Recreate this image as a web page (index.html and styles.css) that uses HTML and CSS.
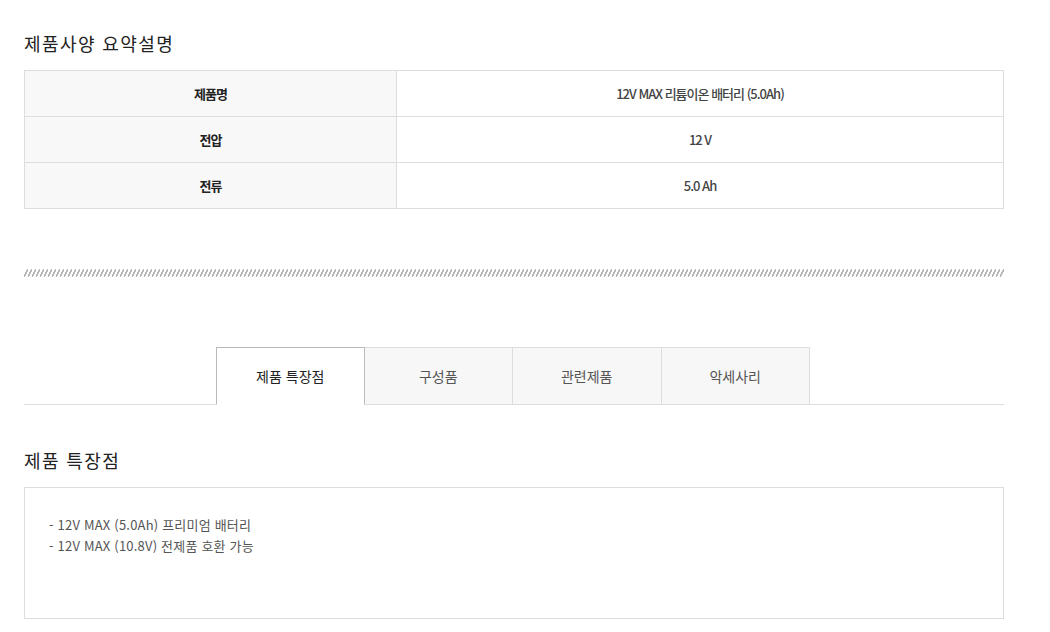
FILE: index.html
```html
<!DOCTYPE html>
<html lang="ko">
<head>
<meta charset="utf-8">
<link rel="stylesheet" href="styles.css">
</head>
<body>
<div class="wrap">
  <h2 class="title">제품사양 요약설명</h2>
  <table class="spec">
    <tr><th>제품명</th><td>12V MAX 리튬이온 배터리 (5.0Ah)</td></tr>
    <tr><th>전압</th><td>12 V</td></tr>
    <tr><th>전류</th><td>5.0 Ah</td></tr>
  </table>
  <div class="hatch"></div>
  <ul class="tabs">
    <li class="tab active">제품 특장점</li>
    <li class="tab">구성품</li>
    <li class="tab">관련제품</li>
    <li class="tab">악세사리</li>
  </ul>
  <h2 class="title title2">제품 특장점</h2>
  <div class="box">
    <p>- 12V MAX (5.0Ah) 프리미엄 배터리</p>
    <p>- 12V MAX (10.8V) 전제품 호환 가능</p>
  </div>
</div>
</body>
</html>
```
FILE: styles.css
```css
* { box-sizing: border-box; }
html, body { margin: 0; padding: 0; background: #fff; }
body { font-family: "Noto Sans CJK KR", "Noto Sans", sans-serif; color: #333; }
.wrap { width: 980px; margin-left: 24px; padding-top: 28px; }
.title { margin: 0; font-size: 18px; font-weight: 400; color: #222; line-height: 30px; letter-spacing: 1.4px; }
.spec { width: 100%; border-collapse: collapse; margin-top: 12px; }
.spec th, .spec td { border: 1px solid #ddd; height: 46px; padding: 0; text-align: center; font-size: 13px; letter-spacing: -1px; color: #333; }
.spec th { width: 372px; background: #f8f8f8; font-weight: 700; color: #222; }
.spec td { font-weight: 500; color: #444; }
.hatch { height: 8px; margin-top: 60px; background-image: linear-gradient(to bottom right, transparent 40%, #b8b8b8 40%, #b8b8b8 60%, transparent 60%); background-size: 4px 8px; }
.tabs { list-style: none; margin: 70px 0 0; padding: 0 2px 0 0; display: flex; justify-content: center; border-bottom: 1px solid #ddd; }
.tab { width: 148.5px; height: 58px; margin-bottom: -1px; display: flex; align-items: center; justify-content: center; font-size: 14px; color: #555; background: #f7f7f7; border: 1px solid #ddd; border-left: none; letter-spacing: 0; }
.tab.active { background: #fff; color: #222; border: 1px solid #bbb; border-bottom-color: #fff; }
.title2 { margin-top: 40px; }
.box { margin-top: 12px; height: 132px; border: 1px solid #ddd; padding: 26px 24px; }
.box p { margin: 0; font-size: 13px; line-height: 21px; color: #555; letter-spacing: 0.2px; }
```
